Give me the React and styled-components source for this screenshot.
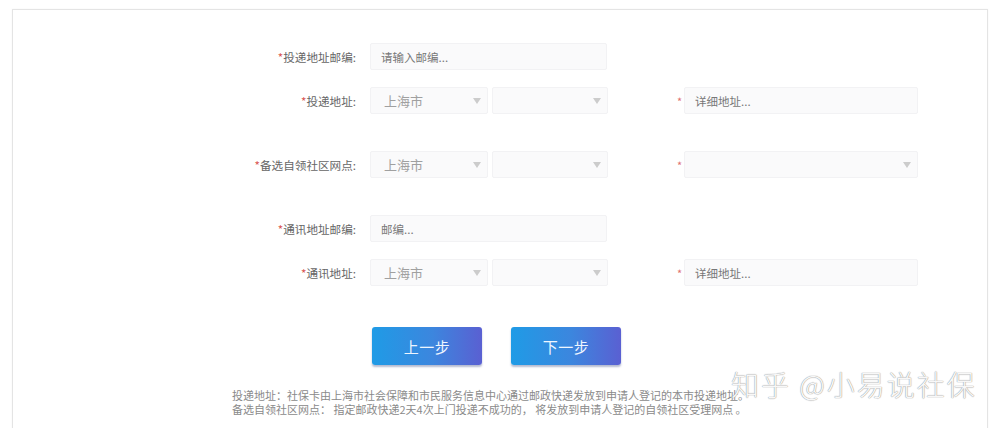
import React from 'react';
import styled, { createGlobalStyle } from 'styled-components';

const GlobalStyle = createGlobalStyle`
  html, body {
    margin: 0;
    padding: 0;
    background: #fff;
    font-family: "Noto Sans CJK SC", "Noto Sans", sans-serif;
    overflow: hidden;
  }
`;

const Page = styled.div`
  position: relative;
  height: 428px;
  padding: 9px 0 0 12px;
  box-sizing: border-box;
`;

const Card = styled.div`
  width: 976px;
  height: 440px;
  box-sizing: border-box;
  border: 1px solid #e4e4e4;
  border-bottom: none;
  box-shadow: 0 0 2px rgba(0, 0, 0, 0.04);
  padding-top: 33px;
`;

const Row = styled.div`
  display: flex;
  align-items: center;
  height: 27px;
  margin-top: ${(p) => p.$gap || 0}px;
`;

const Label = styled.div`
  width: 357px;
  text-align: right;
  font-size: 11.6px;
  color: #666;
  padding-right: 14px;
  box-sizing: border-box;
  flex-shrink: 0;
  white-space: nowrap;
`;

const Star = styled.span`
  color: #d9534f;
`;

const Input = styled.div`
  width: ${(p) => p.$w}px;
  height: 27px;
  box-sizing: border-box;
  background: #fafafb;
  border: 1px solid #f2f2f4;
  border-radius: 2px;
  padding-left: 10px;
  display: flex;
  align-items: center;
  font-size: 11.5px;
  color: #777;
`;

const Select = styled.div`
  width: ${(p) => p.$w}px;
  height: 27px;
  box-sizing: border-box;
  background: #fafafb;
  border: 1px solid #f2f2f4;
  border-radius: 2px;
  padding: 0 6px 0 13px;
  margin-right: ${(p) => p.$mr || 0}px;
  display: flex;
  align-items: center;
  justify-content: space-between;
  font-size: 13px;
  color: #a0a0a0;
`;

const Arrow = styled.span`
  width: 0;
  height: 0;
  border-left: 4px solid transparent;
  border-right: 4px solid transparent;
  border-top: 6px solid #cccccc;
  margin-left: auto;
`;

const Side = styled.div`
  display: flex;
  align-items: center;
  margin-left: 69px;
`;

const SideStar = styled.span`
  color: #e07070;
  font-size: 11px;
  width: 7px;
`;

const Buttons = styled.div`
  display: flex;
  gap: 29px;
  margin: 41px 0 0 359px;
`;

const Button = styled.button`
  width: 110px;
  height: 38px;
  border: none;
  border-radius: 3px;
  background: linear-gradient(90deg, #1f9be6 0%, #3c86de 55%, #5a60d2 100%);
  box-shadow: 0 2px 2px rgba(40, 60, 120, 0.35);
  color: #eef6ff;
  font-family: inherit;
  font-size: 15px;
  letter-spacing: 0.5px;
  cursor: pointer;
`;

const Notes = styled.div`
  margin: 23px 0 0 219px;
  font-size: 11px;
  line-height: 14px;
  color: #8a8a8a;
  white-space: nowrap;
`;

const Watermark = styled.div`
  position: absolute;
  left: 731px;
  top: 364px;
  font-size: 28px;
  font-weight: 300;
  letter-spacing: 2px;
  color: rgba(255, 255, 255, 0.95);
  text-shadow: 0 0 1px #999, 0 0 1px #999;
  white-space: nowrap;
  pointer-events: none;
`;

function CitySelects() {
  return (
    <>
      <Select $w={118} $mr={4}>
        上海市
        <Arrow />
      </Select>
      <Select $w={116}>
        <Arrow />
      </Select>
    </>
  );
}

export default function App() {
  return (
    <Page>
      <GlobalStyle />
      <Card>
        <Row>
          <Label>
            <Star>*</Star>投递地址邮编:
          </Label>
          <Input $w={237}>请输入邮编...</Input>
        </Row>
        <Row $gap={17}>
          <Label>
            <Star>*</Star>投递地址:
          </Label>
          <CitySelects />
          <Side>
            <SideStar>*</SideStar>
            <Input $w={234}>详细地址...</Input>
          </Side>
        </Row>
        <Row $gap={37}>
          <Label>
            <Star>*</Star>备选自领社区网点:
          </Label>
          <CitySelects />
          <Side>
            <SideStar>*</SideStar>
            <Select $w={234}>
              <Arrow />
            </Select>
          </Side>
        </Row>
        <Row $gap={37}>
          <Label>
            <Star>*</Star>通讯地址邮编:
          </Label>
          <Input $w={237}>邮编...</Input>
        </Row>
        <Row $gap={17}>
          <Label>
            <Star>*</Star>通讯地址:
          </Label>
          <CitySelects />
          <Side>
            <SideStar>*</SideStar>
            <Input $w={234}>详细地址...</Input>
          </Side>
        </Row>
        <Buttons>
          <Button>上一步</Button>
          <Button>下一步</Button>
        </Buttons>
        <Notes>
          投递地址：社保卡由上海市社会保障和市民服务信息中心通过邮政快递发放到申请人登记的本市投递地址。
          <br />
          备选自领社区网点： 指定邮政快递2天4次上门投递不成功的， 将发放到申请人登记的自领社区受理网点 。
        </Notes>
      </Card>
      <Watermark>知乎 @小易说社保</Watermark>
    </Page>
  );
}
